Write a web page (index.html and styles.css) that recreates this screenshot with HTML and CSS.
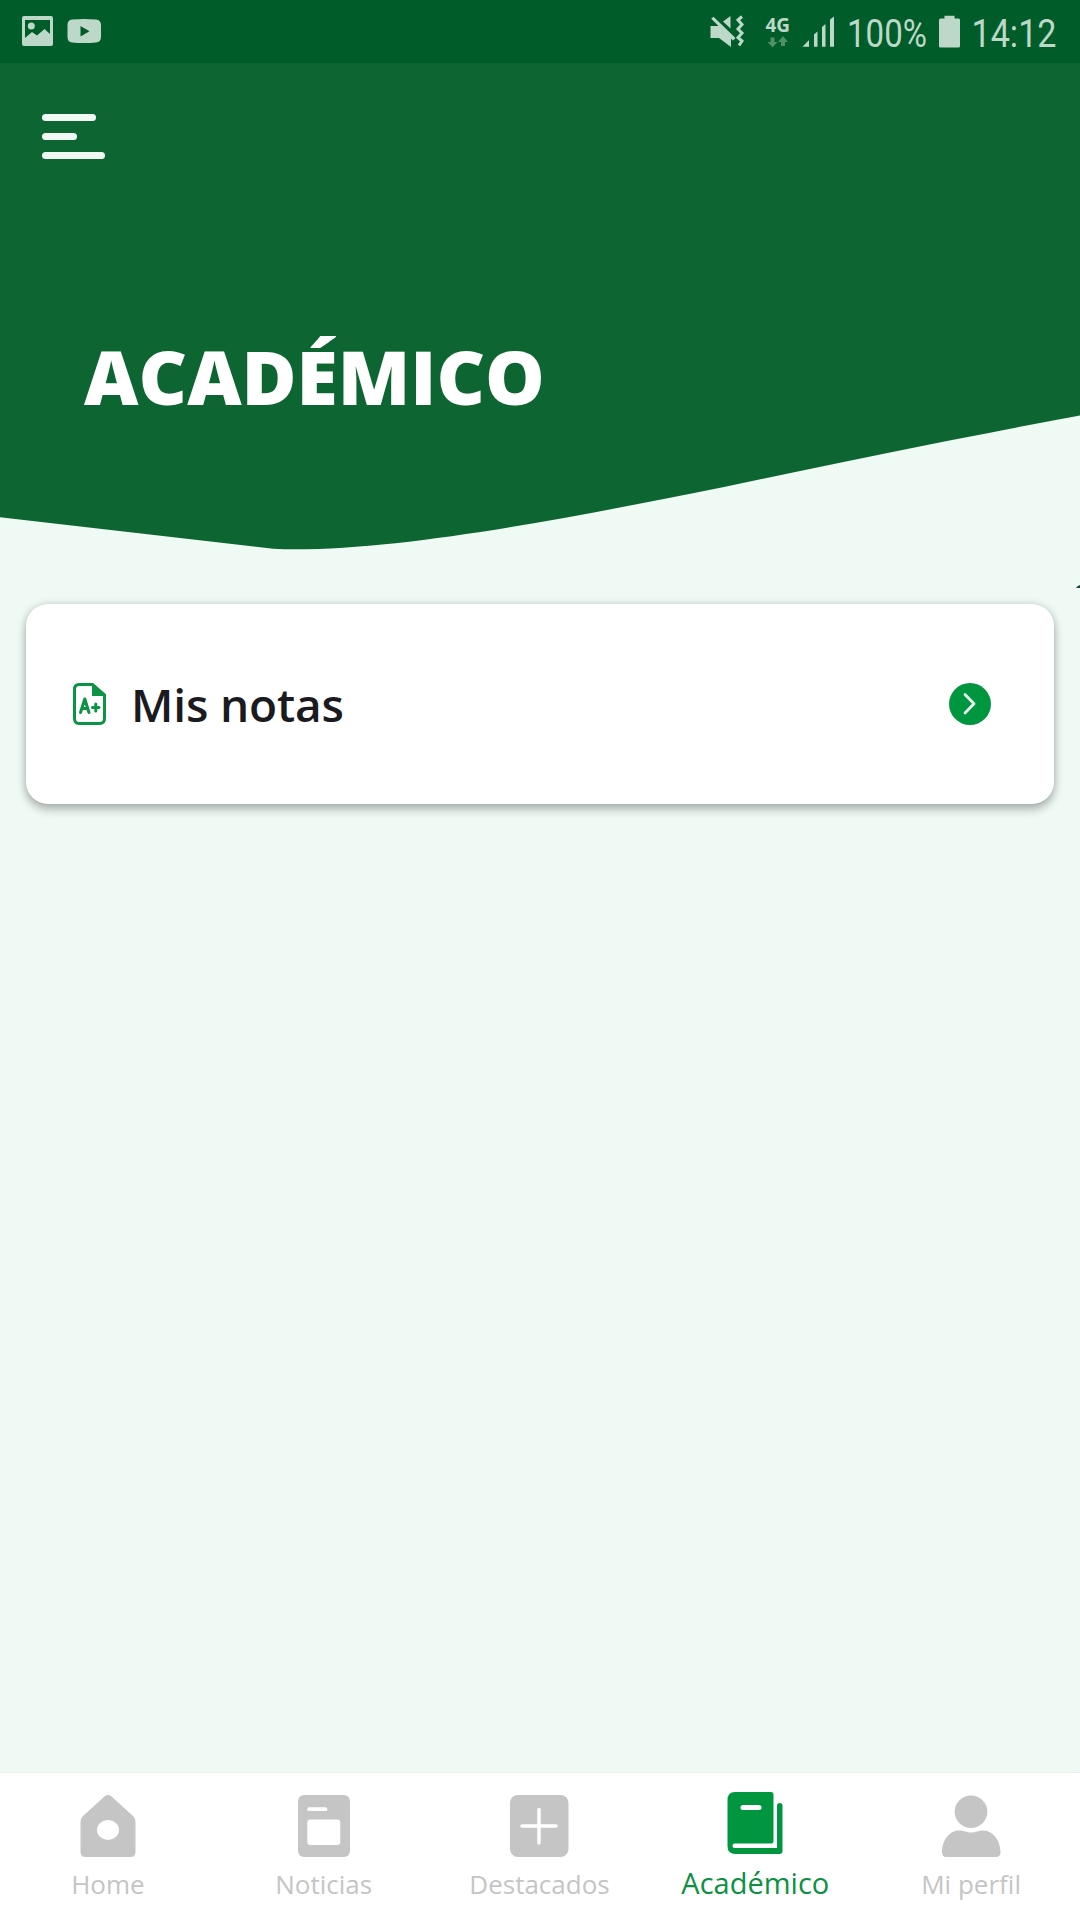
FILE: index.html
```html
<!DOCTYPE html>
<html lang="es">
<head>
<meta charset="utf-8">
<title>Académico</title>
<link rel="stylesheet" href="styles.css">
</head>
<body>
<div class="app">
  <div class="status">
    <svg class="s-image" viewBox="22 16 31 30" width="31" height="30"><path fill-rule="evenodd" d="M24 16H51Q53 16 53 18V44Q53 46 51 46H24Q22 46 22 44V18Q22 16 24 16ZM25 20V38L32 32L37 35.500L44.500 29L50 34V20Z"/><circle cx="31.300" cy="26" r="3.500"/></svg>
    <svg class="s-video" viewBox="67 19 34 24" width="34" height="24"><path fill-rule="evenodd" d="M72 19.500Q84 18.500 96 19.500Q101 20 101 25V37Q101 42 96 42.500Q84 43.500 72 42.500Q67.500 42 67.500 37V25Q67.500 20 72 19.500ZM80.500 26V36.500L89.500 31.200Z"/></svg>
    <svg class="s-mute" viewBox="709 15 36 33" width="36" height="33"><path d="M710.500 26H718.500L731 38.500V47L719 38H710.500ZM723 21.500L730.500 16V28.500ZM711.200 18.700L713.500 16.700L735.500 38L733 40.500Z"/><path class="wave" d="M742 16.500L738 20L742 24.500L738 29L742 33L738 37.500L742 41L739 45.500"/></svg>
    <svg class="s-net" viewBox="764 10 30 42" width="30" height="42"><text class="net-text" x="765.500" y="31.500" textLength="24.500" lengthAdjust="spacingAndGlyphs">4G</text><path class="dim" d="M770.500 37.500H774.500V42H777.500L772.500 47.500L767.500 42H770.500ZM781 46V42H778L783 36L788 42H785V46Z"/></svg>
    <svg class="s-signal" viewBox="802 16 33 31" width="33" height="31"><path d="M802.500 46.700L809 40V46.700ZM814 34.500L817.500 31.500V46.700H814ZM822 27L825.500 24V46.700H822ZM830 19.500L834 16.500V46.700H830Z"/></svg>
    <svg class="s-pct" viewBox="844 3 86 56" width="86" height="56"><text class="clock" x="847" y="46.700" textLength="80" lengthAdjust="spacingAndGlyphs">100%</text></svg>
    <svg class="s-batt" viewBox="939 15 21 33" width="21" height="33"><path d="M944.500 15.700H954.500V18.500H958.500Q960 18.500 960 20V46Q960 47.500 958.500 47.500H940.500Q939 47.500 939 46V20Q939 18.500 940.500 18.500H944.500Z"/></svg>
    <svg class="s-time" viewBox="968 3 90 56" width="90" height="56"><text class="clock" x="971.500" y="46.700" textLength="85" lengthAdjust="spacingAndGlyphs">14:12</text></svg>
  </div>

  <header class="hero">
    <svg class="hero-bg" viewBox="0 63 1080 488" width="1080" height="488"><path d="M0 63H1080V415.500C954 439 837 463 724 487C570 518 385 554 273 548.800L0 517.300Z"/></svg>
    <div class="menu"><span class="bar bar-a"></span><span class="bar bar-b"></span><span class="bar bar-c"></span></div>
    <h1 class="title">ACADÉMICO</h1>
  </header>

  <main class="content">
    <svg class="edge-mark" viewBox="0 0 4 3" width="4" height="3"><path d="M0 3Q1 1 4 0V3Z"/></svg>
    <a class="card">
      <svg class="doc" viewBox="73 683 33 42" width="33" height="42"><path class="doc-line" d="M79 684.500H92.500L104.500 695V718.500Q104.500 723.500 99.500 723.500H79Q74.500 723.500 74.500 718.500V689.500Q74.500 684.500 79 684.500Z"/><path class="doc-fold" d="M92 683.500L105.500 695V696H92Z"/><path class="doc-mark" d="M80.500 712.500L84.800 699L89 712.500M82.200 708.500H87.500M92.500 707.500H99M95.800 704V711"/></svg>
      <span class="card-label">Mis notas</span>
      <svg class="go" viewBox="0 0 42 42" width="42" height="42"><circle cx="21" cy="21" r="21"/><path d="M16 11.500L25 20.800L16 30"/></svg>
    </a>
  </main>

  <nav class="tabs">
    <a class="tab"><svg class="icon" viewBox="0 0 60 62" width="60" height="62"><path fill-rule="evenodd" d="M27 1Q30 -1 33 1L55 21Q57.500 23.500 57.500 27V57Q57.500 62 52.500 62H7.500Q2.500 62 2.500 57V27Q2.500 23.500 5 21ZM19 35A11 10 0 1 0 41 35A11 10 0 1 0 19 35Z"/></svg><span class="label">Home</span></a>
    <a class="tab"><svg class="icon" viewBox="0 0 60 62" width="60" height="62"><rect x="4" width="52" height="62" rx="6"/><rect class="cut" x="13.300" y="12.300" width="20" height="3.800" rx="1.900"/><rect class="cut" x="13.300" y="24.500" width="33" height="25.500" rx="3"/></svg><span class="label">Noticias</span></a>
    <a class="tab"><svg class="icon" viewBox="0 0 60 62" width="60" height="62"><rect x="1" width="58.500" height="62" rx="8"/><path class="plus" d="M30 14.500V48M13 31H47"/></svg><span class="label">Destacados</span></a>
    <a class="tab active"><svg class="icon" viewBox="0 0 60 62" width="60" height="62"><path d="M10 0H46Q48.500 0 48.500 2.500V49Q48.500 51.500 46 51.500H9.500Q7.500 51.500 7.500 53.700T9.500 56H52V13.500Q52 11 54.700 11T57.500 13.500V59Q57.500 62 54.500 62H10.500Q2.500 62 2.500 54V8Q2.500 0 10 0Z"/><rect class="cut" x="15.500" y="13" width="21" height="5" rx="2.500"/></svg><span class="label">Académico</span></a>
    <a class="tab"><svg class="icon" viewBox="0 0 60 62" width="60" height="62"><circle cx="30" cy="16.700" r="16.300"/><path d="M18 35.500C24 35.500 25 37.500 30 37.500C35 37.500 37 35.500 42 35.500C53 35.500 59.500 47 59.500 57Q59.500 62 55 62H5Q1 62 1 57C1 46 8 35.500 18 35.500Z"/></svg><span class="label">Mi perfil</span></a>
  </nav>
</div>
</body>
</html>
```
FILE: styles.css
```css
* { box-sizing: border-box; }
body { margin: 0; background: #f0faf5; font-family: "Open Sans", "Noto Sans", sans-serif; }
svg { display: block; flex: none; overflow: visible; }
.app { width: 1080px; height: 1920px; display: flex; flex-direction: column; overflow: hidden; }

.status { height: 63px; flex: none; display: flex; align-items: flex-start; background: #005c28; padding: 0 22px; fill: #bdd8c8; }
.s-image { margin-top: 16px; }
.s-video { margin: 19px 0 0 14px; }
.s-mute { margin: 15px 0 0 auto; }
.s-net { margin: 10px 0 0 19px; }
.s-signal { margin: 16px 0 0 8px; }
.s-pct { margin: 3px 0 0 9px; }
.s-batt { margin: 15px 0 0 9px; }
.s-time { margin: 3px 0 0 8px; }
.wave { fill: none; stroke: #bdd8c8; stroke-width: 3; }
.net-text { font: 700 19px "Open Sans", sans-serif; }
.dim { fill: #4f9069; }
.clock { font: 400 39px Roboto, sans-serif; }

.hero { position: relative; height: 488px; flex: none; padding: 51px 42px 0; }
.hero-bg { position: absolute; inset: 0; z-index: -1; fill: #0d6632; }
.menu { display: flex; flex-direction: column; gap: 12px; }
.bar { height: 7px; border-radius: 4px; background: #f1f9f4; }
.bar-a { width: 54px; }
.bar-b { width: 35px; }
.bar-c { width: 63px; }
.title { margin: 167px 0 0 42px; font-size: 75px; line-height: 100px; font-weight: 800; color: #fff; white-space: nowrap; }

.content { position: relative; flex: 1; padding: 53px 26px 0; }
.edge-mark { position: absolute; right: 0; top: 34px; fill: #17493b; }
.card { display: flex; align-items: center; height: 200px; padding: 0 63px 0 47px; border-radius: 22px; background: #fff; box-shadow: 0 6px 10px rgba(0,0,0,.24), 0 0 8px rgba(0,0,0,.16); }
.doc-line { fill: none; stroke: #0b9444; stroke-width: 3; }
.doc-fold { fill: #0b9444; }
.doc-mark { fill: none; stroke: #0b9444; stroke-width: 3; stroke-linecap: round; stroke-linejoin: round; }
.card-label { margin-left: 25px; font-size: 46px; line-height: 64px; letter-spacing: -.15px; font-weight: 600; color: #1a1a20; white-space: nowrap; }
.go { margin-left: auto; fill: #00963f; }
.go path { fill: none; stroke: #e9f8ef; stroke-width: 2.800; stroke-linecap: round; stroke-linejoin: round; }

.tabs { height: 148px; flex: none; display: grid; grid-template-columns: repeat(5, 1fr); background: #fff; border-top: 1px solid #e9efeb; padding-right: 1px; }
.tab { display: flex; flex-direction: column; align-items: center; padding-top: 22px; color: #c5c5c5; fill: #c5c5c5; }
.tab.active { padding-top: 19px; color: #0c9143; fill: #00963f; }
.label { margin-top: 10px; font-size: 26px; line-height: 35px; font-weight: 400; white-space: nowrap; }
.active .label { font-size: 29px; line-height: 38px; }
.cut { fill: #fff; }
.plus { fill: none; stroke: #fff; stroke-width: 3.500; stroke-linecap: round; }
```
